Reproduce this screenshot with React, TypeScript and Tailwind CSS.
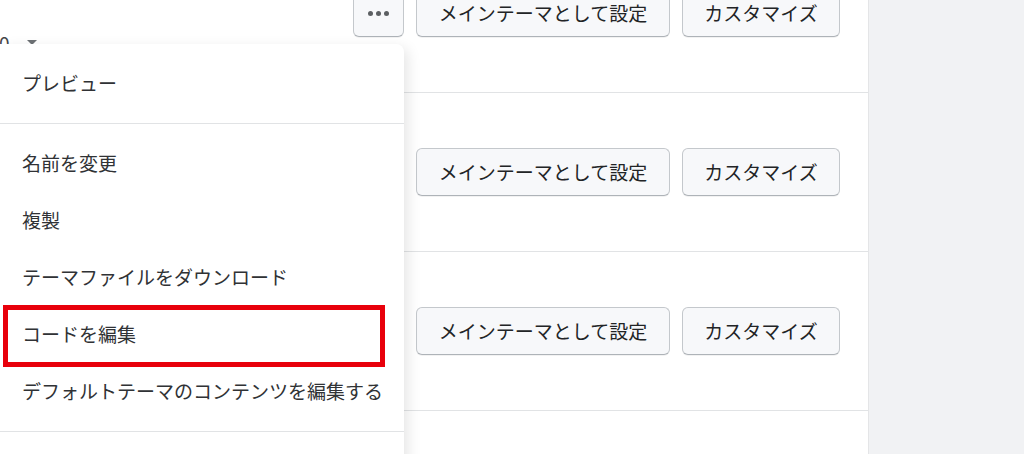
const rows = [0, 1, 2];

const menuMain = [
  "名前を変更",
  "複製",
  "テーマファイルをダウンロード",
  "コードを編集",
  "デフォルトテーマのコンテンツを編集する",
];

function Btn({ children, className = "" }: { children: React.ReactNode; className?: string }) {
  return (
    <button
      className={
        "h-[48px] rounded-[6px] border border-[#c4c8cc] border-b-[#aeb3b8] bg-[#f7f8fa] text-[19px] text-[#222426] shadow-[0_1px_0_rgba(0,0,0,0.05)] " +
        className
      }
    >
      {children}
    </button>
  );
}

export default function App() {
  return (
    <div
      className="relative flex h-[454px] w-[1024px] overflow-hidden bg-[#f1f2f4]"
      style={{ fontFamily: '"Noto Sans CJK JP", "Noto Sans", sans-serif' }}
    >
      <div className="w-[869px] shrink-0 border-r border-[#e4e5e7] bg-white">
        <div className="-mt-[66px]">
          {rows.map((r) => (
            <div
              key={r}
              className="flex h-[159px] items-center justify-end gap-3 border-b border-[#e1e3e5] pr-[28px]"
            >
              {r === 0 && (
                <>
                  <div className="mr-auto flex items-center gap-4 self-end pb-[35px] text-[19px] text-[#454749]">
                    <span className="-ml-[1px]">0</span>
                    <span className="ml-[1px] h-0 w-0 border-x-[5px] border-t-[5px] border-x-transparent border-t-[#6d7175]" />
                  </div>
                  <Btn className="flex w-[51px] items-center justify-center gap-[3px]">
                    <span className="h-[5px] w-[5px] rounded-full bg-[#5c5f62]" />
                    <span className="h-[5px] w-[5px] rounded-full bg-[#5c5f62]" />
                    <span className="h-[5px] w-[5px] rounded-full bg-[#5c5f62]" />
                  </Btn>
                </>
              )}
              <Btn className="w-[254px]">メインテーマとして設定</Btn>
              <Btn className="w-[158px]">カスタマイズ</Btn>
            </div>
          ))}
        </div>
      </div>

      <div className="absolute left-0 top-[44px] w-[404px] rounded-tr-[8px] bg-white text-[19px] text-[#303235] shadow-[4px_4px_14px_rgba(0,0,0,0.10)]">
        <div className="py-[11px]">
          <div className="flex h-[57px] items-center pl-[22px]">プレビュー</div>
        </div>
        <div className="border-t border-[#e1e3e5] py-[11px]">
          {menuMain.map((m) => (
            <div key={m} className="relative flex h-[57px] items-center pl-[22px]">
              {m}
              {m === "コードを編集" && (
                <div className="absolute -top-[1px] left-[3px] h-[62px] w-[382px] border-[5px] border-[#e8000b]" />
              )}
            </div>
          ))}
        </div>
        <div className="h-[40px] border-t border-[#e1e3e5]" />
      </div>
    </div>
  );
}
